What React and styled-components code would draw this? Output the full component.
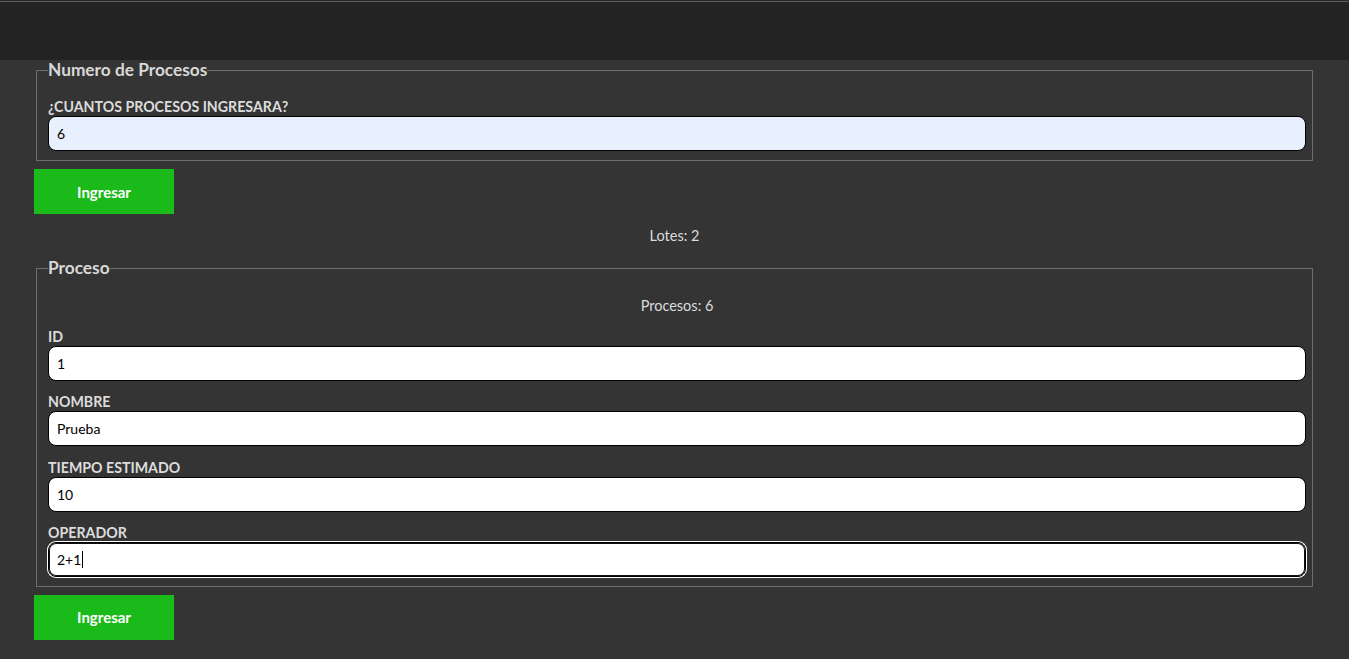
import React from "react";
import styled, { createGlobalStyle } from "styled-components";

const Global = createGlobalStyle`
  html, body { margin: 0; padding: 0; background: #343434; }
  body { font-family: Lato, "Open Sans", sans-serif; color: #ddd; }
  * { box-sizing: border-box; }
`;

const Header = styled.header`
  height: 60px;
  background: linear-gradient(#262626 0 1px, #5e5e5e 1px 2px, #232323 2px);
`;

const Main = styled.main`
  padding: 0 34px 19px;
`;

const Fieldset = styled.fieldset`
  margin: 0 2px;
  padding: 0 6px ${(p) => p.$bottom}px 11px;
  border: 1px solid #6e6e6e;
  min-width: 0;
`;

const Legend = styled.legend`
  padding: 0;
  margin-left: 0;
  font-size: 17.3px;
  line-height: 20px;
  font-weight: 700;
  color: #d8d8d8;
`;

const Label = styled.label`
  display: block;
  font-size: 14.2px;
  line-height: 16px;
  font-weight: 700;
  color: #dcdcdc;
  margin-top: ${(p) => p.$top}px;
  margin-bottom: 1px;
  text-transform: uppercase;
`;

const Field = styled.div`
  position: relative;
`;

const Input = styled.input`
  display: block;
  width: 100%;
  height: 35px;
  padding: 0 8px;
  border: 1px solid #000;
  border-radius: 8px;
  font-family: Lato, "Open Sans", sans-serif;
  font-size: 14px;
  color: #000;
  background: ${(p) => (p.$autofill ? "#e8f0fe" : "#fff")};
  outline: none;
  caret-color: transparent;
  box-shadow: ${(p) =>
    p.$focused ? "0 0 0 1px #fff, inset 0 0 0 1px #111" : "none"};
`;

const Caret = styled.span`
  position: absolute;
  left: 34px;
  top: 9px;
  width: 1px;
  height: 17px;
  background: #000;
  pointer-events: none;
`;

const Button = styled.button`
  display: block;
  width: 140px;
  height: 45px;
  margin-top: ${(p) => p.$top}px;
  border: none;
  background: #1aba1a;
  color: #fff;
  font-family: Lato, "Open Sans", sans-serif;
  font-size: 15px;
  font-weight: 700;
  cursor: pointer;
`;

const Info = styled.p`
  margin: ${(p) => p.$top}px 0 0;
  text-align: center;
  font-size: 14.5px;
  line-height: 17px;
  color: #dcdcdc;
`;

const Spacer = styled.div`
  height: ${(p) => p.$h}px;
`;

const fields = [
  { label: "ID", value: "1" },
  { label: "NOMBRE", value: "Prueba" },
  { label: "TIEMPO ESTIMADO", value: "10" },
  { label: "OPERADOR", value: "2+1", focused: true },
];

export default function App() {
  return (
    <>
      <Global />
      <Header />
      <Main>
        <Fieldset $bottom={9}>
          <Legend>Numero de Procesos</Legend>
          <Label $top={19}>¿Cuantos procesos ingresara?</Label>
          <Input $autofill defaultValue="6" />
        </Fieldset>
        <Button $top={8}>Ingresar</Button>
        <Info $top={13}>Lotes: 2</Info>
        <Spacer $h={14} />
        <Fieldset $bottom={9.5}>
          <Legend>Proceso</Legend>
          <Info $top={19}>Procesos: 6</Info>
          {fields.map((f, i) => (
            <React.Fragment key={f.label}>
              <Label $top={i === 0 ? 15 : 13.3}>{f.label}</Label>
              <Field>
                <Input defaultValue={f.value} $focused={f.focused} />
                {f.focused && <Caret />}
              </Field>
            </React.Fragment>
          ))}
        </Fieldset>
        <Button $top={7.5}>Ingresar</Button>
      </Main>
    </>
  );
}
